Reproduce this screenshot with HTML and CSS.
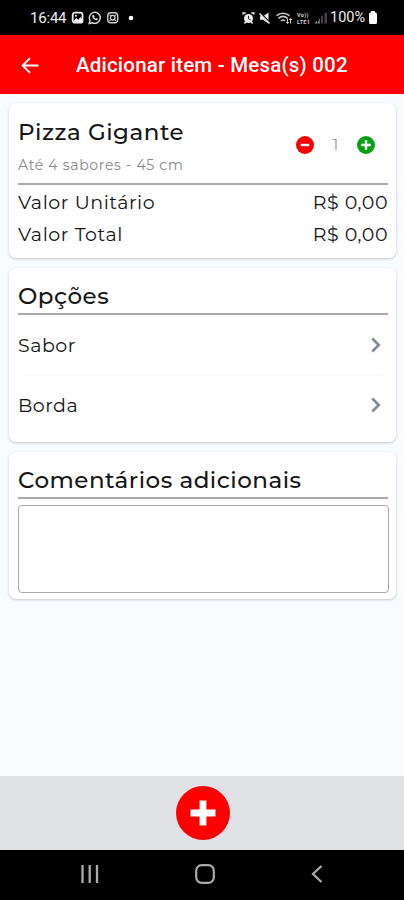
FILE: index.html
```html
<!DOCTYPE html>
<html lang="pt-BR">
<head>
<meta charset="utf-8">
<title>Adicionar item</title>
<link rel="stylesheet" href="styles.css">
</head>
<body>
<div class="screen">
  <div class="status">
    <span class="clock">16:44</span>
    <svg class="notif" width="64" height="14" viewBox="0 0 64 14">
      <rect x="1.700" y="1.700" width="9.800" height="10" rx="2" fill="none" stroke="#eee" stroke-width="1.800"/>
      <path d="M2.500 10l2.800-3 2 1.800L9.500 6l1.500 2v3H2.500z" fill="#eee"/><circle cx="5" cy="4.700" r="1" fill="#eee"/>
      <path d="M18.200 12.500l.8-3A5.500 5.500 0 1 1 21.500 11.800z" fill="none" stroke="#ddd" stroke-width="1.400"/>
      <path d="M21.300 4.300c-.6 2.500 2.300 5.400 4.900 5l.8-1.300-1.600-.9-.8.7-1.500-1.500.6-.8-.8-1.600z" fill="#ddd"/>
      <rect x="36.700" y="1.700" width="10" height="10" rx="3.200" fill="none" stroke="#ccc" stroke-width="1.400"/>
      <circle cx="41.700" cy="6.700" r="2.300" fill="none" stroke="#ccc" stroke-width="1.300"/>
      <circle cx="39.100" cy="4.200" r=".8" fill="#ccc"/><circle cx="44.400" cy="4.200" r=".8" fill="#ccc"/><circle cx="39.100" cy="9.300" r=".8" fill="#ccc"/><circle cx="44.400" cy="9.300" r=".8" fill="#ccc"/>
      <circle cx="60" cy="7" r="2.300" fill="#fff"/>
    </svg>
    <svg class="signals" width="86" height="16" viewBox="0 0 86 16">
      <circle cx="6.500" cy="8.500" r="4.500" fill="#eee"/>
      <path d="M1.200 4.500V3h2.500M11.800 4.500V3H9.300M2.500 13.500l1.500-2M10.500 13.500l-1.500-2" fill="none" stroke="#eee" stroke-width="1.600"/>
      <path d="M6.500 5.800v3l2 1" fill="none" stroke="#222" stroke-width="1"/>
      <path d="M18 6.200h3L26.500 2.500v11l-5.500-3.700h-3z" fill="#eee"/>
      <path d="M18 3l10 10" stroke="#000" stroke-width="2"/><path d="M17.500 3.500L27.500 13.500" stroke="#eee" stroke-width="1.400"/>
      <path d="M34.500 5.700q6.500-5 13 0M36.500 8.300q4.500-3.800 9 0M39 11q2-2 4 0" fill="none" stroke="#ccc" stroke-width="1.600"/>
      <path d="M45.500 8.500v5m-1.500-1.500l1.500 1.500 1.500-1.500M48.500 13.500v-5m-1.500 1.500l1.500-1.500 1.500 1.500" fill="none" stroke="#ccc" stroke-width="1"/>
      <text class="volte" x="55" y="7">Vo))</text><text class="volte" x="55" y="14">LTE1</text>
      <path d="M72.500 13.500h2.500v-3zM75.500 13.500h2.200V8z" fill="#999"/>
      <path d="M79 13.500V6.500l2-1.500v8.500zM82.500 13.500V3.500L85 2v11.500z" fill="#444"/>
    </svg>
    <span class="percent">100%</span>
    <svg class="battery" width="10" height="13" viewBox="0 0 10 13"><path d="M3 0h4v1.500h.5a1.500 1.500 0 0 1 1.500 1.500v8.500a1.500 1.500 0 0 1-1.500 1.500h-5A1.500 1.500 0 0 1 1 11.500V3a1.500 1.500 0 0 1 1.500-1.500H3z" fill="#fff"/></svg>
  </div>

  <header class="appbar">
    <svg class="back" width="18" height="17" viewBox="0 0 18 17"><path d="M17.500 8.500H1.700M9 1.200L1.700 8.500 9 15.800" fill="none" stroke="#fff" stroke-width="1.900"/></svg>
    <h1 class="title">Adicionar item - Mesa(s) 002</h1>
  </header>

  <main class="content">
    <section class="card product">
      <div class="product-head">
        <div>
          <h2 class="heading">Pizza Gigante</h2>
          <p class="detail">Até 4 sabores - 45 cm</p>
        </div>
        <div class="stepper">
          <svg width="18" height="18" viewBox="0 0 18 18"><circle cx="9" cy="9" r="9" fill="#f60000"/><path d="M4.700 9h8.600" stroke="#fff" stroke-width="2.400"/></svg>
          <span class="count">1</span>
          <svg width="18" height="18" viewBox="0 0 18 18"><circle cx="9" cy="9" r="9" fill="#07a315"/><path d="M4.300 9h9.400M9 4.300v9.400" stroke="#fff" stroke-width="2.400"/></svg>
        </div>
      </div>
      <div class="price"><span class="label">Valor Unitário</span><span class="amount">R$ 0,00</span></div>
      <div class="price"><span class="label">Valor Total</span><span class="amount">R$ 0,00</span></div>
    </section>

    <section class="card options">
      <h2 class="heading section-title">Opções</h2>
      <div class="option"><span>Sabor</span><svg width="10" height="16" viewBox="0 0 10 16"><path d="M1.300 1.500L7.800 8l-6.500 6.500" fill="none" stroke="#858b98" stroke-width="2.600"/></svg></div>
      <div class="option"><span>Borda</span><svg width="10" height="16" viewBox="0 0 10 16"><path d="M1.300 1.500L7.800 8l-6.500 6.500" fill="none" stroke="#858b98" stroke-width="2.600"/></svg></div>
    </section>

    <section class="card comments">
      <h2 class="heading section-title">Comentários adicionais</h2>
      <textarea class="note" aria-label="Comentários adicionais"></textarea>
    </section>
  </main>

  <footer class="actions">
    <svg width="54" height="54" viewBox="0 0 54 54"><circle cx="27" cy="27" r="27" fill="#f00"/><path d="M14.500 27h25M27 14.500v25" stroke="#fff" stroke-width="6.800"/></svg>
  </footer>
  <nav class="sysnav">
    <svg width="18" height="18" viewBox="0 0 18 18"><path d="M1.500 0v18M8.700 0v18M16 0v18" stroke="#aaa" stroke-width="2.300"/></svg>
    <svg width="20" height="20" viewBox="0 0 20 20"><rect x="1.200" y="1.200" width="17.600" height="17.600" rx="5.500" fill="none" stroke="#aaa" stroke-width="2.200"/></svg>
    <svg width="12" height="18" viewBox="0 0 12 18"><path d="M10.500 1L2 9l8.500 8" fill="none" stroke="#aaa" stroke-width="2.300"/></svg>
  </nav>
</div>
</body>
</html>
```
FILE: styles.css
```css
* { box-sizing: border-box; }
body { margin: 0; background: #f8fbff; }
svg { display: block; flex: none; }
h1, h2, p { margin: 0; }

.screen {
  display: flex;
  flex-direction: column;
  width: 404px;
  height: 900px;
  overflow: hidden;
  color: #161616;
  font-family: Montserrat, Inter, sans-serif;
}

.status {
  display: flex;
  align-items: center;
  height: 35px;
  padding: 0 26px 0 30px;
  background: #000;
  color: #eee;
  font-family: Roboto, sans-serif;
}
.clock { width: 41px; font-size: 15px; letter-spacing: -.2px; }
.signals { margin-left: auto; }
.percent { width: 38px; margin-left: 2px; font-size: 14.5px; }
.volte { fill: #ccc; font: 700 5.5px Roboto, sans-serif; letter-spacing: .3px; }

.appbar {
  display: flex;
  align-items: center;
  height: 59px;
  padding: 1px 22px 0 21px;
  background: #f00;
  color: #fff;
}
.title {
  margin-left: 37px;
  font: 500 20.5px/24px Roboto, sans-serif;
  letter-spacing: .2px;
  white-space: nowrap;
}

.content {
  display: flex;
  flex: 1;
  flex-direction: column;
  gap: 10px;
  padding: 9px 8px 0 9px;
}
.card {
  padding: 0 8px 0 9px;
  background: #fff;
  border-radius: 7px;
  box-shadow: 0 1px 3px rgba(0, 0, 0, .22);
}
.product { height: 155px; }
.options { height: 174px; }
.comments { height: 147px; }

.heading {
  font-size: 23px;
  font-weight: 500;
  line-height: 28px;
  letter-spacing: .5px;
  white-space: nowrap;
}
.product-head {
  display: flex;
  justify-content: space-between;
  height: 82px;
  padding-top: 15px;
  border-bottom: 2px solid #aaa;
}
.detail {
  margin-top: 9px;
  color: #888;
  font-size: 14px;
  line-height: 20px;
  letter-spacing: .7px;
  white-space: nowrap;
}
.stepper { display: flex; align-items: center; gap: 17px; height: 18px; margin: 18px 13px 0 0; }
.count { width: 9px; color: #888; font-size: 14px; text-align: center; }
.price {
  display: flex;
  align-items: center;
  justify-content: space-between;
  height: 32px;
  padding-top: 3px;
  font-size: 19px;
  white-space: nowrap;
}
.label { letter-spacing: .6px; }
.amount { letter-spacing: .5px; }

.section-title { height: 47px; padding-top: 14px; border-bottom: 2px solid #aaa; }
.option {
  display: flex;
  align-items: center;
  justify-content: space-between;
  height: 60px;
  padding-right: 7px;
  font-size: 19px;
  letter-spacing: .5px;
}
.option + .option { height: 59px; border-top: 1px solid #fafafa; }
.note {
  display: block;
  width: 371px;
  height: 88px;
  margin-top: 6px;
  border: 1.5px solid #aaa;
  border-radius: 4px;
  background: #fff;
  resize: none;
}

.actions {
  display: flex;
  align-items: center;
  justify-content: center;
  height: 74px;
  padding-left: 1px;
  background: #dfe1e5;
}
.sysnav {
  display: flex;
  align-items: center;
  justify-content: space-between;
  height: 50px;
  padding: 0 81px 2px;
  background: #000;
}
```
